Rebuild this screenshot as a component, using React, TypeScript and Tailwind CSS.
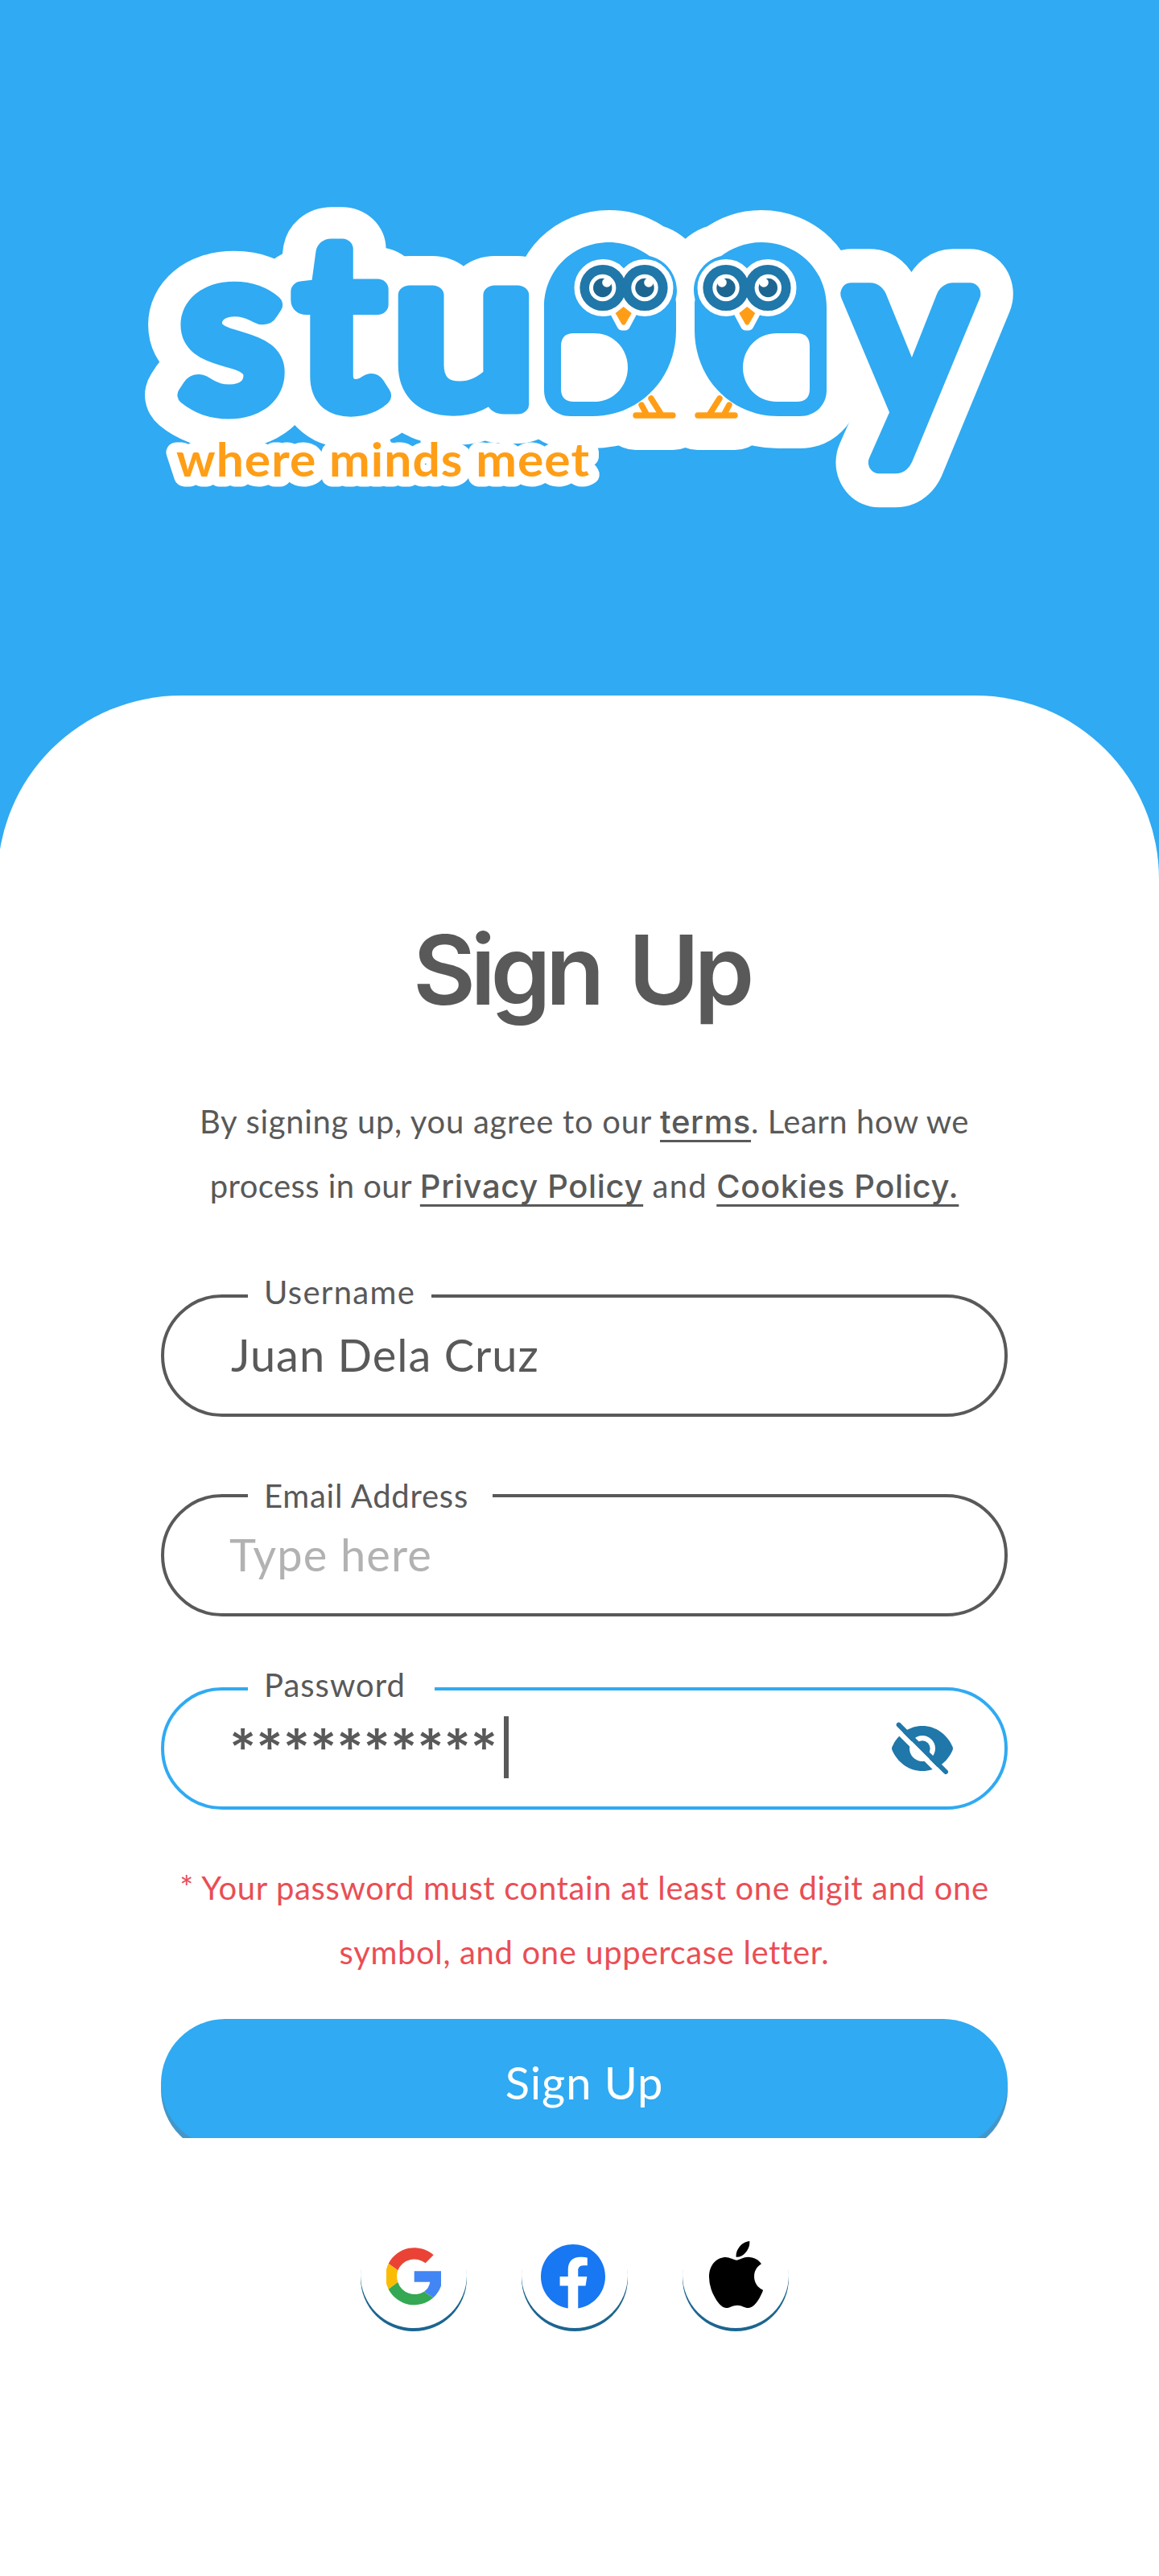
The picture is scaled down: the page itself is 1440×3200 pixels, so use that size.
import React from "react";

const BODY =
  "M676 382C676 335 712 301 757 301C778 301 795 309 807 318C826 322 841 340 841 361Q841 366 839.5 372L840 376V410C840 470 795 517 736 517H709C690 517 676 503 676 485Z";
const FOOT = "M790 516H836M797 503L803 514M809 495L821 514";
const MIRROR = "matrix(-1 0 0 1 1703 0)";

function Letters() {
  return (
    <g fontFamily="Lato" fontSize="290">
      <text transform="matrix(1.021 0 0 0.961 223.75 505.65)">s</text>
      <text transform="matrix(1.033 0 0 0.993 368.3 502.5)">t</text>
      <text transform="matrix(1.096 0 0 0.925 488.15 502.5)">u</text>
      <text transform="matrix(1.023 0 0 1.065 1054.5 521.5)">y</text>
    </g>
  );
}

function Tagline() {
  return (
    <text
      x="219"
      y="591.5"
      fontFamily="Lato"
      fontWeight="700"
      fontSize="58"
      letterSpacing="1"
      textLength="514"
      lengthAdjust="spacingAndGlyphs"
    >
      where minds meet
    </text>
  );
}

function Owl() {
  return (
    <g>
      <path d={BODY} fill="#30aaf2" />
      <path
        d="M713 414H738C763 414 780 434 780 456.5S763 499 738 499H713Q697 499 697 483V430Q697 414 713 414Z"
        fill="#fff"
      />
      <g fill="#fff" stroke="#fff" strokeWidth="13" strokeLinejoin="round">
        <circle cx="749" cy="357.5" r="29" />
        <circle cx="801" cy="357.5" r="29" />
        <path d="M774.7 381L765 389L773 404H776.5L784.5 389Z" />
      </g>
      <circle cx="749" cy="357.5" r="28.6" fill="#2077a9" />
      <circle cx="801" cy="357.5" r="28.6" fill="#2077a9" />
      <path d={FOOT} fill="none" stroke="#ff9e16" strokeWidth="7.4" strokeLinecap="round" />
      <path d="M774.7 381L784.7 389L777 402.5Q774.7 405 772.4 402.5L764.7 389Z" fill="#ff9e16" />
    </g>
  );
}

function Pupils({ x }: { x: number }) {
  return (
    <g>
      <circle cx={x} cy="357.5" r="16.7" fill="#fff" />
      <circle cx={x} cy="357.5" r="11.7" fill="#1c6591" />
    </g>
  );
}

function Logo() {
  return (
    <svg className="block h-[400px] w-[1100px]" viewBox="170 240 1100 400">
      <g fill="#fff" stroke="#fff" strokeLinejoin="round" strokeLinecap="round">
        <g strokeWidth="105">
          <Letters />
        </g>
        <path d={BODY} strokeWidth="80" />
        <path d={FOOT} strokeWidth="86" />
        <g transform={MIRROR}>
          <path d={BODY} strokeWidth="80" />
          <path d={FOOT} strokeWidth="86" />
        </g>
        <g strokeWidth="25">
          <Tagline />
        </g>
      </g>
      <g fill="#30aaf2" stroke="#30aaf2" strokeLinejoin="round" strokeWidth="26">
        <Letters />
      </g>
      <Owl />
      <g transform={MIRROR}>
        <Owl />
      </g>
      <Pupils x={748.7} />
      <Pupils x={801} />
      <Pupils x={902} />
      <Pupils x={954.3} />
      <g fill="#fff">
        <circle cx="754" cy="351" r="5.8" />
        <circle cx="806" cy="351" r="5.8" />
        <circle cx="897" cy="351" r="5.8" />
        <circle cx="949" cy="351" r="5.8" />
      </g>
      <g fill="#ff9e16">
        <Tagline />
      </g>
    </svg>
  );
}

function EyeOff() {
  return (
    <svg className="block h-[95px] w-[100px]" viewBox="0 0 300 285">
      <defs>
        <clipPath id="pupil">
          <path d="M0 -12L300 288V0Z" />
        </clipPath>
      </defs>
      <path
        d="M40 146Q38 141 40 136C60 88 104 57 153 57S246 88 266 136Q268 141 266 146C246 194 202 225 153 225S60 194 40 146Z"
        fill="#2077a9"
      />
      <circle cx="153" cy="141" r="48" fill="#fff" />
      <circle cx="153" cy="141" r="29" fill="#2077a9" clipPath="url(#pupil)" />
      <path d="M41.5 56.5L236.5 251.5" stroke="#fff" strokeWidth="19" />
      <path d="M65 53L240 228" stroke="#2077a9" strokeWidth="18" strokeLinecap="round" />
    </svg>
  );
}

function Google() {
  return (
    <svg className="block h-[72px] w-[68px]" viewBox="30 36 204 216">
      <path d="M38 96A107.5 107.5 0 0 1 206 64L176 94A66 66 0 0 0 73 121Z" fill="#ea4335" />
      <path d="M38 96L73 121A66 66 0 0 0 73 165L38 191A107.5 107.5 0 0 1 38 96Z" fill="#fbbc05" />
      <path d="M38 191L73 165A66 66 0 0 0 171 200L205 223A107.5 107.5 0 0 1 38 191Z" fill="#34a853" />
      <path d="M134 124H238A107.5 107.5 0 0 1 205 223L171 200Q189 187 193 164H134Z" fill="#4285f4" />
    </svg>
  );
}

function Facebook() {
  return (
    <svg className="block h-20 w-20" viewBox="8 8 496 496">
      <path
        fill="#1877f2"
        d="M504 256C504 119 393 8 256 8S8 119 8 256c0 123.78 90.69 226.38 209.25 245V327.69h-63V256h63v-54.64c0-62.15 37-96.48 93.67-96.48 27.14 0 55.52 4.84 55.52 4.84v61h-31.28c-30.8 0-40.41 19.12-40.41 38.73V256h68.78l-11 71.69h-57.78V501C413.31 482.38 504 379.78 504 256z"
      />
    </svg>
  );
}

function Apple() {
  return (
    <svg className="block h-[83px] w-[67px]" viewBox="4 32 376 448" preserveAspectRatio="none">
      <path d="M318.7 268.7c-.2-36.7 16.4-64.4 50-84.8-18.8-26.9-47.2-41.7-84.7-44.6-35.5-2.8-74.3 20.7-88.5 20.7-15 0-49.4-19.7-76.4-19.7C63.3 141.2 4 184.8 4 273.5q0 39.3 14.4 81.2c12.8 36.7 59 126.7 107.2 125.2 25.2-.6 43-17.9 75.8-17.9 31.8 0 48.3 17.9 76.4 17.9 48.6-.7 90.4-82.5 102.6-119.3-65.2-30.7-61.7-90-61.7-91.9zm-56.6-164.2c27.3-32.4 24.8-61.9 24-72.5-24.1 1.4-52 16.4-67.9 34.9-17.5 19.8-27.8 44.3-25.6 71.9 26.1 2 49.9-11.4 69.5-34.3z" />
    </svg>
  );
}

const LINK =
  "font-['Inter',sans-serif] font-medium leading-none tracking-[0.65px] underline decoration-[3px] underline-offset-[8px] [text-decoration-skip-ink:none]";
const FIELD = "relative flex h-[152px] rounded-[76px] border-4 border-[#595959] pl-[84px]";
const LABEL = "absolute left-[104px] h-10 bg-white pl-5 text-[40px] leading-10 whitespace-nowrap";
const SOCIAL = "flex h-[132px] w-[132px] justify-center rounded-full bg-white shadow-[0_4px_0_#1c6590]";

export default function App() {
  return (
    <main className="h-[3200px] w-[1440px] overflow-hidden bg-[#30aaf2] font-['Lato',sans-serif] text-[#595959]">
      <header className="h-[864px] pt-60 pl-[170px]">
        <Logo />
      </header>
      <section className="-ml-[3px] h-[2336px] w-[1443px] rounded-t-[228px] bg-white pt-[280px] pl-[203px]">
        <div className="w-[1052px]">
          <h1 className="mr-2 text-center font-['Inter',sans-serif] text-[120px] leading-[122px] font-semibold tracking-[-6.5px] [word-spacing:12px]">
            Sign Up
          </h1>
          <p className="mt-[87px] text-center text-[40px] leading-[80px] whitespace-nowrap">
            <span className="tracking-[0.7px]">By signing up, you agree to our </span>
            <a className={LINK}>terms</a>
            <span className="tracking-[0.5px]">. Learn how we</span>
            <br />
            <span className="tracking-[0.43px]">process in our </span>
            <a className={LINK}>Privacy Policy</a>
            <span className="tracking-[1.2px]"> and </span>
            <a className={LINK}>Cookies Policy.</a>
          </p>

          <div className={`${FIELD} mt-[95px]`}>
            <label className={`${LABEL} -top-[27px] w-[228px] tracking-[1.3px]`}>Username</label>
            <span className="mt-[43px] -ml-px text-[56px] leading-[56px] tracking-[1px]">Juan Dela Cruz</span>
          </div>
          <div className={`${FIELD} mt-24`}>
            <label className={`${LABEL} -top-[22px] w-[304px] tracking-[0.75px]`}>Email Address</label>
            <span className="mt-[43px] -ml-[3px] text-[56px] leading-[56px] tracking-[1.1px] text-[#b2b2b2]">
              Type here
            </span>
          </div>
          <div className="relative mt-[88px] flex h-[152px] rounded-[76px] border-4 border-[#30aaf2] pl-[84px]">
            <label className={`${LABEL} -top-[27px] w-[232px] tracking-[1px]`}>Password</label>
            <span className="mt-[39px] -ml-[3px] w-[341px] font-['Inter',sans-serif] text-[64px] leading-[64px] font-medium whitespace-nowrap">
              **********
            </span>
            <span className="mt-8 h-[77px] w-1.5 bg-[#595959]" />
            <span className="mt-[25px] mr-[53px] ml-auto">
              <EyeOff />
            </span>
          </div>

          <p className="mt-[57px] text-center text-[40px] leading-[80px] tracking-[0.64px] whitespace-nowrap text-[#ea4e55]">
            * Your password must contain at least one digit and one
            <br />
            symbol, and one uppercase letter.
          </p>

          <div className="mt-[43px] h-[148px] overflow-hidden">
            <button className="block h-40 w-full rounded-[80px] bg-[#30aaf2] pb-0.5 text-[56px] leading-[56px] tracking-[0.95px] text-white shadow-[0_8px_0_#4596c8]">
              Sign Up
            </button>
          </div>

          <div className="mt-[104px] ml-[248px] flex gap-[68px]">
            <div className={`${SOCIAL} pt-8`}>
              <Google />
            </div>
            <div className={`${SOCIAL} pt-7 pr-1`}>
              <Facebook />
            </div>
            <div className={`${SOCIAL} pt-6`}>
              <Apple />
            </div>
          </div>
        </div>
      </section>
    </main>
  );
}
